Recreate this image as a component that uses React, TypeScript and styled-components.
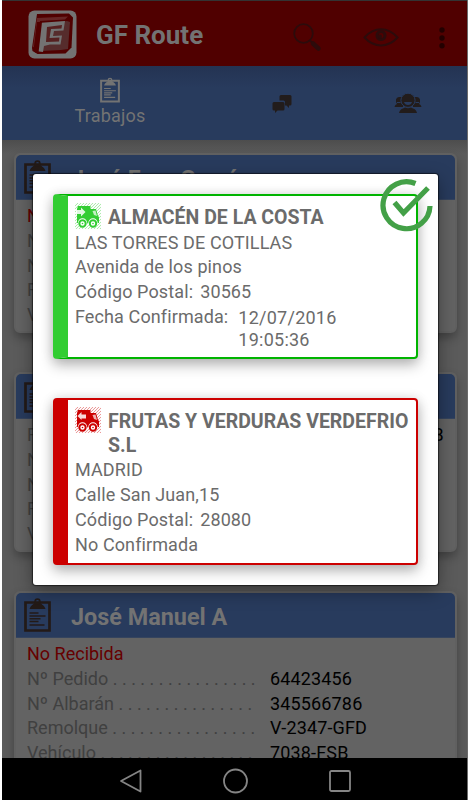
import React from "react";
import styled, { createGlobalStyle } from "styled-components";

const Global = createGlobalStyle`
  * { box-sizing: border-box; }
  body { margin: 0; background: #fff; font-family: Roboto, "Liberation Sans", sans-serif; overflow: hidden; }
  svg { display: block; flex: none; }
`;

const Device = styled.div`
  position: relative;
  display: flex;
  flex-direction: column;
  width: 466px;
  height: 800px;
  margin-left: 2px;
  overflow: hidden;
  background: #5b5b5b;
  border-right: 1px solid #6b6b6b;
`;

const AppBar = styled.header`
  display: flex;
  align-items: center;
  flex: none;
  height: 66px;
  padding: 2px 22px 0 26px;
  background: #500000;
  border-top: 1px solid #333;
`;

const AppTitle = styled.h1`
  flex: 1;
  margin: 0 0 0 19px;
  font-size: 26px;
  line-height: 32px;
  font-weight: 700;
  color: #737373;
`;

const Actions = styled.div`
  display: flex;
  align-items: center;
  padding-top: 6px;
`;

const Search = styled.span` margin-right: 41px; `;
const Eye = styled.span` margin-right: 40px; `;

const Tabs = styled.nav`
  display: grid;
  grid-template-columns: 215px 130px 1fr;
  flex: none;
  height: 74px;
  background: linear-gradient(#243352, #283b5d 22px, #283b5d);
`;

const Tab = styled.div<{ $pad: number; $drop: number }>`
  display: flex;
  flex-direction: column;
  align-items: center;
  padding: ${(p) => p.$drop}px 0 0 ${(p) => p.$pad}px;
  font-size: 18px;
  line-height: 26px;
  letter-spacing: 0.2px;
  color: #737373;
`;

const List = styled.main`
  display: flex;
  flex-direction: column;
  gap: 39px;
  flex: 1;
  min-height: 0;
  overflow: hidden;
  padding: 13px 10px 0 12px;
  background: linear-gradient(#4d4d4d, #5b5b5b 14px);
`;

const Job = styled.article`
  flex: none;
  height: 180px;
  border: 2px solid #606060;
  border-radius: 6px;
  background: #636363;
  box-shadow: 0 5px 10px rgba(0, 0, 0, 0.28);
`;

const JobHead = styled.div`
  display: flex;
  align-items: center;
  height: 45px;
  padding-left: 8px;
  border-radius: 5px 5px 0 0;
  background: #283b5d;
  border-bottom: 1px solid #35445e;
`;

const JobName = styled.h2`
  margin: 4px 0 0 20px;
  font-size: 23.4px;
  line-height: 30px;
  font-weight: 700;
  color: #737373;
`;

const JobBody = styled.div`
  padding: 4px 0 0 11px;
  font-size: 18px;
  line-height: 24.8px;
`;

const Status = styled.div`
  color: #660000;
`;

const Field = styled.div`
  display: grid;
  grid-template-columns: 243px 1fr;
  white-space: nowrap;
`;

const Label = styled.span` color: #404040; `;
const Value = styled.span<{ $wide?: boolean }>`
  color: #000;
  letter-spacing: ${(p) => (p.$wide ? 0.22 : 0.15)}px;
`;

const NavBar = styled.footer`
  display: flex;
  justify-content: space-between;
  align-items: center;
  flex: none;
  height: 42px;
  padding: 4px 116px 0 117px;
  background: #000;
`;

const Dialog = styled.section`
  position: absolute;
  left: 31px;
  top: 174px;
  width: 405px;
  height: 411px;
  padding: 20px;
  display: flex;
  flex-direction: column;
  gap: 39px;
  border-radius: 3px;
  background: #fff;
  box-shadow: 0 0 1px 1px rgba(0, 0, 0, 0.55), 0 6px 18px rgba(0, 0, 0, 0.4);
`;

const Stop = styled.article<{ $tone: string; $bar: string }>`
  position: relative;
  display: flex;
  width: 365px;
  height: ${(p) => (p.$tone === "#00b400" ? 165 : 167)}px;
  border: 2px solid ${(p) => p.$tone};
  border-left: 15px solid ${(p) => p.$bar};
  border-radius: 4px;
  background: #fff;
  box-shadow: 0 6px 14px rgba(0, 0, 0, 0.28), 0 0 12px rgba(0, 0, 0, 0.1);
`;

const StopBody = styled.div`
  flex: 1;
  padding: 7px 0 0 7px;
  font-size: 18px;
  line-height: 24.9px;
  letter-spacing: 0.11px;
  color: #6b6b6b;
  white-space: nowrap;
`;

const StopHead = styled.div`
  display: flex;
  gap: 7px;
  margin-bottom: 1px;
`;

const StopName = styled.h3`
  margin: 3px 0 0;
  font-size: 19.5px;
  line-height: 23.5px;
  font-weight: 700;
  letter-spacing: 0;
`;

const PostCode = styled.span`
  margin-left: 2.5px;
`;

const DateRow = styled.div`
  display: flex;
  gap: 10px;
`;

const DateValue = styled.span`
  padding-top: 2px;
  line-height: 21.5px;
  letter-spacing: 0.25px;
`;

const CheckBadge = styled.span`
  position: absolute;
  right: -17px;
  top: -18px;
`;

const Clip = ({ w, h, c }: { w: number; h: number; c: string }) => (
  <svg width={w} height={h} viewBox="0 0 27 34" fill="none" stroke={c}>
    <path d="M1.5 4.500h24v28h-24z" strokeWidth="2.700" />
    <path d="M5.500 11C6.500 7.500 9 6.500 11 5h5c2 1.500 4.500 2.500 5.500 6z" fill={c} stroke="none" />
    <circle cx="13.500" cy="3.500" r="2.300" strokeWidth="1.800" />
    <path d="M5.500 15h9M5.500 18h16M5.500 20.800h11M5.500 23.500h9M5.500 27h15" strokeWidth="1.600" />
  </svg>
);

const Logo = () => (
  <svg width="49" height="49" viewBox="0 0 49 49">
    <rect x=".5" y=".5" width="48" height="48" rx="6" fill="#737373" />
    <path d="M9 4 41 3.500l4 4-1.500 30-6 6-28 .5-5-3-.5-3z" fill="#500000" />
    <path d="M9 8 40 6.500l-3 3L12 11 8 38l-3-1z" fill="#662626" />
    <path d="M14 14 39 11l3 1-2 27-7 1-20 1z" fill="#562c2c" />
    <path d="M7 41 10 13l27-2-1.500 9.500L26 21l-1 5 9-.5-1.500 9H22l-6 1.500L15 42z" fill="#737373" />
    <path d="M5.500 40 9 12h5l-3.500 31H8z" fill="#500000" />
    <path d="M19 17 34 15l-.5 3.500L23 19l-1.500 9 10-.5-.5 4-13 .5z" fill="#562020" />
  </svg>
);

const Truck = ({ color, id, left }: { color: string; id: string; left?: boolean }) => (
  <svg width="26" height="26" viewBox="0 0 26 26">
    <defs>
      <pattern id={id} width="3" height="3" patternUnits="userSpaceOnUse">
        <rect width="3" height="3" fill="#fff" />
        <path d="M-1 4 4-1M-1 1 1-1M2 4 4 2" stroke={color} strokeWidth=".8" opacity=".55" />
      </pattern>
    </defs>
    <rect width="26" height="26" fill={color} opacity=".15" />
    <rect width="26" height="26" fill={`url(#${id})`} opacity=".85" />
    <path d="M3 3h12.500v3H21l2 7 1 1v6H2V6z" fill={color} />
    <path d="m17.500 8 3-.5 1.500 5.500-3-1z" fill="#fff" opacity=".7" />
    {left ? (
      <path d="m2.500 9 4-4v2.500h4.500v4H6.500V13z" fill="#fff" opacity=".85" />
    ) : (
      <path d="M1 7h5V4.500L10.500 9 6 13.500V11H1z" fill="#fff" opacity=".85" />
    )}
    {[7.5, 18].map((x) => (
      <g key={x}>
        <circle cx={x} cy="20" r="4.700" fill="#fff" />
        <circle cx={x} cy="20.500" r="3.200" fill="#fff" stroke={color} strokeWidth="2" />
        <circle cx={x} cy="20.500" r=".8" fill={color} />
      </g>
    ))}
  </svg>
);

const CheckMark = () => (
  <svg width="54" height="54" viewBox="0 0 54 54" fill="none" stroke="#43a047" strokeWidth="5.200">
    <path d="M36.500 5.500A23.500 23.500 0 1 0 51 28" />
    <path d="m15.500 24.500 9 10.500L49 10" />
  </svg>
);

const jobs = [
  { name: "José Fran García", ref: "64423453" },
  { name: "", ref: "64423458" },
  { name: "José Manuel A", ref: "64423456" },
];

const dots = (n: number) => Array(n).fill(".").join(" ");

const JobCard = ({ name, refNo, hasStatus }: { name: string; refNo: string; hasStatus: boolean }) => (
  <Job>
    <JobHead>
      <Clip w={27} h={34} c="#231a17" />
      <JobName>{name}</JobName>
    </JobHead>
    <JobBody>
      {hasStatus && <Status>No Recibida</Status>}
      {!hasStatus && <Field><Label>Recibida</Label><Value $wide>12/07/2016 18:53:48</Value></Field>}
      <Field><Label>Nº Pedido {dots(16)}</Label><Value>{refNo}</Value></Field>
      <Field><Label>Nº Albarán {dots(15)}</Label><Value>345566786</Value></Field>
      <Field><Label>Remolque {dots(16)}</Label><Value>V-2347-GFD</Value></Field>
      <Field><Label>Vehículo {dots(17)}</Label><Value>7038-FSB</Value></Field>
    </JobBody>
  </Job>
);

export default function App() {
  return (
    <>
      <Global />
      <Device>
        <AppBar>
          <Logo />
          <AppTitle>GF Route</AppTitle>
          <Actions>
            <Search>
              <svg width="29" height="29" viewBox="0 0 29 29" fill="none" stroke="#2c0b0b">
                <circle cx="10.500" cy="10.500" r="9.300" strokeWidth="1.800" />
                <path d="m16.500 17 3 3" strokeWidth="2" />
                <path d="m20 20.500 5.500 5" strokeWidth="4.500" strokeLinecap="round" />
              </svg>
            </Search>
            <Eye>
              <svg width="36" height="19" viewBox="0 0 36 19" fill="none" stroke="#2c0b0b">
                <path d="M1.500 9.500C11-1.500 25-1.500 34.500 9.500 25 20 11 20 1.500 9.500z" strokeWidth="2" />
                <circle cx="18" cy="7.500" r="4" strokeWidth="3" />
                <circle cx="17" cy="8.500" r="2" fill="#2c0b0b" stroke="none" />
              </svg>
            </Eye>
            <svg width="6" height="22" viewBox="0 0 6 22" fill="#230000">
              <circle cx="3" cy="3" r="2.700" />
              <circle cx="3" cy="11" r="2.700" />
              <circle cx="3" cy="18.700" r="2.700" />
            </svg>
          </Actions>
        </AppBar>
        <Tabs>
          <Tab $pad={1} $drop={11}>
            <Clip w={20} h={26} c="#737373" />
            Trabajos
          </Tab>
          <Tab $pad={0} $drop={28}>
            <svg width="20" height="20" viewBox="0 0 20 20" fill="#221c1b">
              <path d="M9 1h9q1.500 0 1.500 1.500V10q0 1.500-1.500 1.500h-1V14l-2.500-2.500H13V8q0-1.500-1.500-1.500H7.500v-4Q7.500 1 9 1z" />
              <path d="M2 8h9q1.500 0 1.500 1.500V15q0 1.500-1.500 1.500H5.500L3 19v-2.500H2Q.5 16.500.5 15V9.500Q.5 8 2 8z" />
            </svg>
          </Tab>
          <Tab $pad={1} $drop={27}>
            <svg width="28" height="21" viewBox="0 0 28 21" fill="#221c1b">
              <path d="M5 4h3.500v8H9v2H.5Q1 11.500 3 11 1.500 9 2 6.500 2.500 4 5 4zM23 4h-3.500v8H19v2h8.500q-.5-2.500-2.500-3 1.500-2 1-4.500Q25.500 4 23 4z" />
              <circle cx="14" cy="7.300" r="7.100" stroke="#283b5d" strokeWidth="1" />
              <path d="M10 9h8q-.8 3-4 3t-4-3z" fill="#283b5d" />
              <path d="M5 20q1-4 4-4.500l2-1q3 1.500 6 0l2 1q3 .5 4 4.500z" />
              <path d="M3 9.500h3.500M21.500 9.500H25" stroke="#283b5d" />
            </svg>
          </Tab>
        </Tabs>
        <List>
          {jobs.map((j, i) => (
            <JobCard key={i} name={j.name} refNo={j.ref} hasStatus={i !== 1} />
          ))}
        </List>
        <NavBar>
          <svg width="24" height="26" viewBox="0 0 24 26" fill="none" stroke="#858585" strokeWidth="1.800" strokeLinejoin="round">
            <path d="M21.500 2.500v21L2 13z" />
          </svg>
          <svg width="26" height="26" viewBox="0 0 26 26" fill="none" stroke="#858585" strokeWidth="1.800">
            <circle cx="12.500" cy="13" r="11.500" />
          </svg>
          <svg width="22" height="22" viewBox="0 0 22 22" fill="none" stroke="#858585" strokeWidth="1.800">
            <rect x="1" y="1" width="20" height="20" rx="1.500" />
          </svg>
        </NavBar>
        <Dialog>
          <Stop $tone="#00b400" $bar="#32cd32">
            <StopBody>
              <StopHead>
                <Truck color="#32cd32" id="hatch-green" />
                <StopName>ALMACÉN DE LA COSTA</StopName>
              </StopHead>
              <div>LAS TORRES DE COTILLAS</div>
              <div>Avenida de los pinos</div>
              <div>Código Postal: <PostCode>30565</PostCode></div>
              <DateRow>
                <span>Fecha Confirmada:</span>
                <DateValue>12/07/2016<br />19:05:36</DateValue>
              </DateRow>
            </StopBody>
            <CheckBadge><CheckMark /></CheckBadge>
          </Stop>
          <Stop $tone="#cc0000" $bar="#cc0000">
            <StopBody>
              <StopHead>
                <Truck color="#cc0000" id="hatch-red" left />
                <StopName>FRUTAS Y VERDURAS VERDEFRIO<br />S.L</StopName>
              </StopHead>
              <div>MADRID</div>
              <div>Calle San Juan,15</div>
              <div>Código Postal: <PostCode>28080</PostCode></div>
              <div>No Confirmada</div>
            </StopBody>
          </Stop>
        </Dialog>
      </Device>
    </>
  );
}
